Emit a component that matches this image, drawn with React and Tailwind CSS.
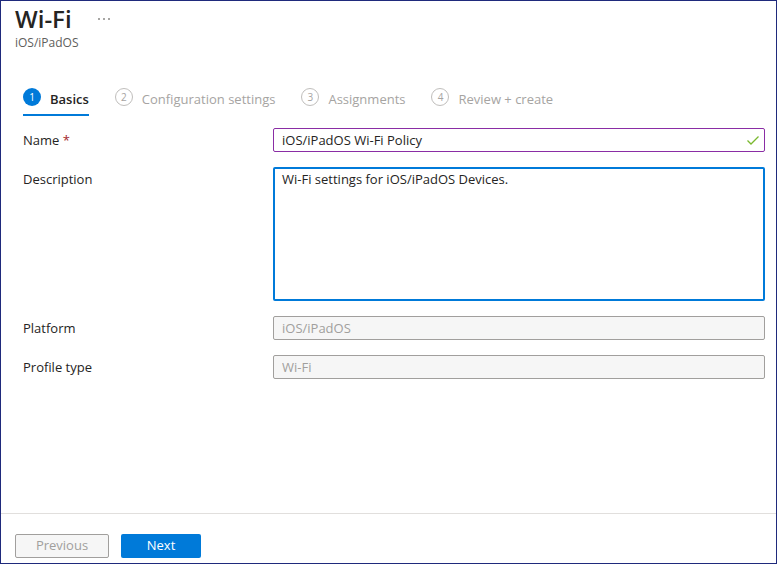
const steps = ["Basics", "Configuration settings", "Assignments", "Review + create"];

function Header() {
  return (
    <header className="px-3.5 pt-1">
      <div className="flex items-center gap-6">
        <h1 className="text-[24px] leading-7 font-semibold text-[#252423]">Wi-Fi</h1>
        <button type="button" aria-label="More options" className="flex h-5 w-4 items-center justify-center gap-[3px]">
          <span className="size-0.5 rounded-full bg-[#8a8886]" />
          <span className="size-0.5 rounded-full bg-[#8a8886]" />
          <span className="size-0.5 rounded-full bg-[#8a8886]" />
        </button>
      </div>
      <p className="mt-0.5 text-[12px] leading-4 text-[#605e5c]">iOS/iPadOS</p>
    </header>
  );
}

function Steps() {
  return (
    <nav aria-label="Steps" className="mt-9 flex gap-[26px] pl-[22px]">
      {steps.map((step, i) => (
        <button
          key={step}
          type="button"
          aria-current={i === 0 ? "step" : undefined}
          className={
            i === 0
              ? "flex h-[29px] gap-[9px] border-b-2 border-[#007ad9] text-[13px] leading-6 font-semibold whitespace-nowrap text-[#252423]"
              : "flex h-[29px] gap-[9px] border-b-2 border-transparent text-[13px] leading-6 whitespace-nowrap text-[#a6a4a2]"
          }
        >
          <span
            className={
              i === 0
                ? "mt-px flex size-[18px] items-center justify-center rounded-full bg-[#007ad9] text-[10px] leading-4 font-normal text-white"
                : "mt-px flex size-[18px] items-center justify-center rounded-full border border-[#c0bebc] text-[10px] leading-4 text-[#a6a4a2]"
            }
          >
            {i + 1}
          </span>
          {step}
        </button>
      ))}
    </nav>
  );
}

function Field({ id, label, required, children }) {
  return (
    <div className="flex">
      <label htmlFor={id} className="w-[250px] shrink-0 leading-6 text-[#252423]">
        {label}
        {required && <span className="text-[#a4262c]"> *</span>}
      </label>
      <div className="relative flex min-w-0 flex-1">{children}</div>
    </div>
  );
}

const disabledInput =
  "h-6 w-full rounded-xs border border-[#a19f9d] bg-[#f6f6f6] px-2 text-[#a19f9d]";

export default function App() {
  return (
    <main className="flex min-h-screen flex-col border border-[#1f2a7c] bg-white font-['Open_Sans','Noto_Sans',sans-serif] text-[13px]">
      <Header />
      <Steps />
      <form className="mt-3 flex flex-1 flex-col gap-[15px] pr-[11px] pb-6 pl-[22px]">
        <Field id="name" label="Name" required>
          <input
            id="name"
            type="text"
            required
            defaultValue="iOS/iPadOS Wi-Fi Policy"
            className="h-6 w-full rounded-xs border border-[#8a2da5] pr-7 pl-2 text-[#252423] outline-none"
          />
          <svg aria-hidden="true" viewBox="0 0 12 9" className="absolute top-2 right-1.5 h-[9px] w-3" fill="none" stroke="#7ab82e" strokeWidth="1.3">
            <path d="M.5 4.5 4 8 11.5.5" />
          </svg>
        </Field>
        <Field id="description" label="Description">
          <textarea
            id="description"
            defaultValue="Wi-Fi settings for iOS/iPadOS Devices."
            className="h-[134px] w-full resize-none rounded-xs border-2 border-[#007ad9] px-[7px] py-0 leading-5 text-[#252423] outline-none"
          />
        </Field>
        <Field id="platform" label="Platform">
          <input id="platform" type="text" disabled defaultValue="iOS/iPadOS" className={disabledInput} />
        </Field>
        <Field id="profile-type" label="Profile type">
          <input id="profile-type" type="text" disabled defaultValue="Wi-Fi" className={disabledInput} />
        </Field>
      </form>
      <footer className="flex gap-3 border-t border-[#e1dfdd] px-3.5 pt-5 pb-[5px]">
        <button type="button" disabled className="h-6 w-[94px] rounded-xs border border-[#a19f9d] bg-[#f6f6f6] text-[#a19f9d]">
          Previous
        </button>
        <button type="button" className="h-6 w-20 rounded-xs bg-[#007ad9] text-white">
          Next
        </button>
      </footer>
    </main>
  );
}
